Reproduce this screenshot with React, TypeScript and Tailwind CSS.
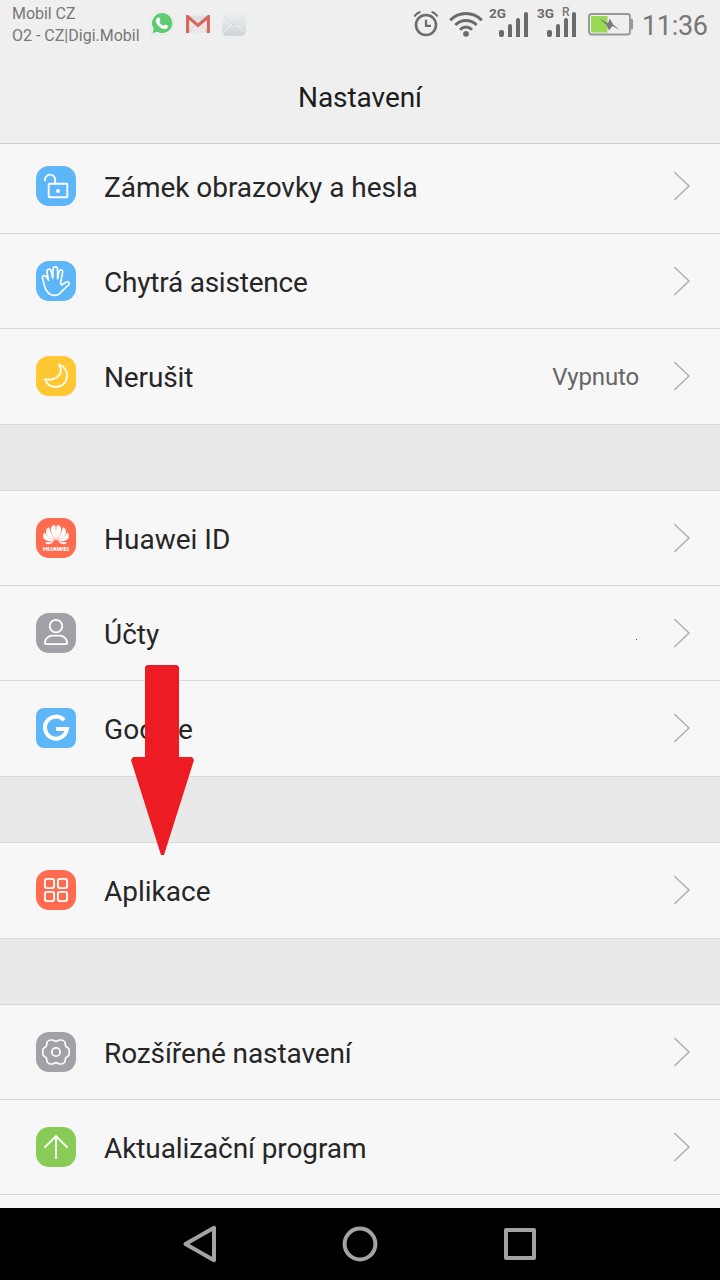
import type { ReactNode } from "react";

type SettingsRowProps = {
    label: string;
    icon: ReactNode;
    // background and corner radius of the icon tile
    tile: string;
    value?: string;
    dot?: boolean;
    tall?: boolean;
    tracking?: string;
};

const LockIcon = () => (
    <svg viewBox="0 0 40 40" className="size-10" fill="none" stroke="white" strokeWidth="1.9">
        <rect x="12.7" y="17.7" width="18.6" height="13.6" rx="0.8" />
        <path d="M9 15.3v-1.6a5.1 5.1 0 0 1 10.2 0v4" />
        <circle cx="22" cy="25" r="2" fill="white" stroke="none" />
    </svg>
);

const HandIcon = () => (
    <svg viewBox="0 0 40 40" className="size-10" fill="none" stroke="white" strokeWidth="1.6" strokeLinejoin="round" strokeLinecap="round">
        <path d="M12.5 19.3 10.2 15.6C8.8 13.8 5.8 15 6.6 17.4L8.3 24C9.3 28.5 11.3 31.6 14.6 33.6Q18.3 35.2 22.6 33.6C25.8 31 27.6 27.8 32.6 24.2C34.5 22.4 32.4 19.8 30 21.2L25.4 24C24 22.6 24.7 20.5 25.2 18.5L26.7 11.2C27 8.8 23.6 8 23 10.6L21.6 17.7L21.5 8C21.4 5.2 17.3 5.2 17 8L16.8 17.3L15 9.6C14.2 7.2 10.5 8 11 10.8L12.5 19.3" />
    </svg>
);

const MoonIcon = () => (
    <svg viewBox="0 0 40 40" className="size-10" fill="none" stroke="white" strokeWidth="1.8" strokeLinejoin="round">
        <path d="M22.8 8.7C28 10.4 31.3 14.8 31.1 19.8C30.9 26.2 25.9 31 19.8 31C14.7 31 10.5 27.8 8.9 23C14.5 24.8 20.5 23.2 23.4 18.8C25.4 15.8 25 11.8 22.8 8.7Z" />
    </svg>
);

const HuaweiIcon = () => (
    <svg viewBox="0 0 40 40" className="size-10" fill="white">
        <path d="M19.6 22.5C17 18.8 14.5 14.5 14.9 10.4C15.2 8.4 17 7.2 19 7C20.100 10.500 20.200 17 19.600 22.500Z" />
        <path d="M20.4 22.5C23 18.8 25.5 14.5 25.1 10.4C24.8 8.4 23 7.2 21 7C19.900 10.500 19.800 17 20.400 22.500Z" />
        <path d="M18.6 22.9C14.7 21 10.4 18 10 14.200C9.8 12 11 10 13 9.200C14.4 13.800 16.800 18.800 18.600 22.900Z" />
        <path d="M21.4 22.9C25.3 21 29.6 18 30 14.200C30.2 12 29 10 27 9.200C25.6 13.800 23.200 18.800 21.400 22.900Z" />
        <path d="M18.2 23.500C13.6 23.500 9.3 23.200 7.7 20.200C6.7 18.200 7 16 8.4 14.400C11 17.800 14.8 21 18.200 23.500Z" />
        <path d="M21.8 23.500C26.4 23.500 30.7 23.200 32.3 20.200C33.3 18.200 33 16 31.6 14.400C29 17.800 25.2 21 21.800 23.500Z" />
        <path d="M17.6 24.300H9C10.5 26.900 14 26.600 17.600 24.300Z" />
        <path d="M22.4 24.300H31C29.5 26.900 26 26.600 22.400 24.300Z" />
        <text x="7" y="33" fontSize="5.4" fontWeight="800" textLength="26" lengthAdjust="spacingAndGlyphs" fontFamily="Inter, sans-serif">HUAWEI</text>
    </svg>
);

const PersonIcon = () => (
    <svg viewBox="0 0 40 40" className="size-10" fill="none" stroke="white" strokeWidth="1.8">
        <circle cx="20" cy="13.1" r="6.3" />
        <path d="M9.8 31.1Q8.9 31.1 8.9 30.2C8.9 25.4 12.5 22.7 16.6 22.7H23.4C27.5 22.7 31.1 25.4 31.1 30.2Q31.1 31.1 30.2 31.1Z" />
    </svg>
);

const GoogleIcon = () => (
    <svg viewBox="0 0 40 40" className="size-10" fill="none" stroke="white" strokeWidth="4">
        <path d="M28.1 12.2A11 11 0 1 0 30.9 21H20" />
    </svg>
);

const AppsIcon = () => (
    <svg viewBox="0 0 40 40" className="size-10" fill="none" stroke="white" strokeWidth="1.9">
        <rect x="8.9" y="8.9" width="9.2" height="9.2" rx="2" />
        <rect x="21.9" y="8.9" width="9.2" height="9.2" rx="2" />
        <rect x="8.9" y="21.9" width="9.2" height="9.2" rx="2" />
        <rect x="21.9" y="21.9" width="9.2" height="9.2" rx="2" />
    </svg>
);

const GearIcon = () => (
    <svg viewBox="0 0 40 40" className="size-10" fill="none" stroke="white" strokeWidth="1.7" strokeLinejoin="round">
        <circle cx="20" cy="20" r="4.2" />
        <path d="M20 9.4C21.4 9.4 22.2 8 23.8 8H25C27.6 8 29.2 10 29.2 12.200C29.200 14.200 30.200 14.900 31.400 15.400C32.700 16 33.200 17.200 33.200 18.400V21.600C33.200 22.800 32.700 24 31.400 24.600C30.200 25.100 29.200 25.800 29.200 27.800C29.200 30 27.600 32 25 32H23.800C22.200 32 21.400 30.600 20 30.600C18.600 30.600 17.800 32 16.200 32H15C12.400 32 10.800 30 10.800 27.800C10.800 25.800 9.800 25.100 8.600 24.600C7.300 24 6.800 22.800 6.800 21.600V18.400C6.800 17.200 7.300 16 8.600 15.400C9.800 14.900 10.800 14.200 10.800 12.200C10.800 10 12.400 8 15 8H16.200C17.800 8 18.600 9.400 20 9.400Z" />
    </svg>
);

const UpdateIcon = () => (
    <svg viewBox="0 0 40 40" className="size-10" fill="none" stroke="white" strokeWidth="1.9">
        <path d="M20 32V9M8.5 20.6 20 9.1 31.5 20.6" />
    </svg>
);

const Chevron = () => (
    <svg viewBox="0 0 18 30" className="h-[30px] w-[18px]" fill="none" stroke="#b0b0b0" strokeWidth="1.5">
        <path d="M1.3 1 16 15 1.3 29" />
    </svg>
);

function SettingsRow({ label, icon, tile, value, dot, tall, tracking = "tracking-normal" }: SettingsRowProps) {
    return (
        <div className={`border-b border-[#d9d9d9] bg-[#f7f7f7] ${tall ? "h-24" : "h-[95px]"}`}>
            <div className="flex h-[94px] items-center pr-[29px] pl-9">
                <div className={`size-10 shrink-0 overflow-hidden ${tile}`}>{icon}</div>
                <span className={`ml-7 pt-1 text-[28px] leading-8 whitespace-nowrap text-[#262626] ${tracking}`}>{label}</span>
                <span className="grow" />
                {value && <span className="mr-[34px] pt-0.5 text-[24px] leading-7 tracking-[-0.15px] text-[#666]">{value}</span>}
                {dot && <span className="mt-3 mr-9 size-px bg-[#ed1c24]" />}
                <Chevron />
            </div>
        </div>
    );
}

function SignalBars() {
    return (
        <div className="flex h-[25px] items-end gap-1">
            <span className="h-[7px] w-[5px] rounded-xs bg-[#6b6b6b]" />
            <span className="h-[13px] w-1 rounded-t-xs bg-[#6b6b6b]" />
            <span className="h-[19px] w-1 rounded-t-xs bg-[#6b6b6b]" />
            <span className="h-[25px] w-1 rounded-t-xs bg-[#6b6b6b]" />
        </div>
    );
}

function StatusBar() {
    return (
        <div className="flex h-[50px] items-start">
            <div className="w-[150px] pt-[3px] pl-3 text-[16px] leading-[22px] whitespace-nowrap text-[#777]">
                <p className="tracking-[-0.05px]">Mobil CZ</p>
                <p>O2 - CZ|Digi.Mobil</p>
            </div>
            <svg viewBox="0 0 24 25" className="mt-[11px] h-[25px] w-6">
                <path d="M12.2 .6a11.500 11.500 0 0 1 0 23q-3 0-5.500-1.300L.8 24.400 2 17.500A11.500 11.500 0 0 1 12.200 .6Z" fill="#fff" stroke="#d4d4d4" strokeWidth=".6" />
                <path d="M12.200 2a10.100 10.100 0 1 1-5.200 18.700L2.300 22.400l1.300-4.900A10.100 10.100 0 0 1 12.200 2Z" fill="#5fcb72" />
                <path d="M8 6.400c.8-.4 1.200-.2 1.500.5l.9 2.200c.2.700-.9 1.300-1 1.900.8 1.700 2.200 3 4.100 3.800.6 0 1.100-1.400 1.800-1.200l2.400 1.200c.6.300.2 1.800-.4 2.400-1.800 1.700-4.800.8-6.900-.7-2.200-1.500-4.700-4.200-4.500-7.200.1-1.200.9-2.300 2.100-2.900Z" fill="#fff" />
            </svg>
            <svg viewBox="0 0 24 18" className="mt-[15px] ml-3 h-[18px] w-6">
                <path d="M0 0H24V18H0Z" fill="#e9e9e9" />
                <path d="M3 17.500 9 9.500M21 17.500 15 9.500" stroke="#d2d2d2" strokeWidth="1" />
                <path d="M3 1.200H21L12 8.500Z" fill="#dedede" />
                <path d="M1.600 18V1.600L12 10.500 22.400 1.600V18" fill="none" stroke="#db655c" strokeWidth="3.100" />
            </svg>
            <svg viewBox="0 0 24 24" className="mt-3 ml-3 size-6">
                <defs>
                    <linearGradient id="mail" x1="0" y1="0" x2="0" y2="1">
                        <stop offset="0" stopColor="#eceff0" />
                        <stop offset=".5" stopColor="#dfe4e7" />
                        <stop offset="1" stopColor="#ccd2d7" />
                    </linearGradient>
                </defs>
                <rect x=".3" y=".3" width="23.400" height="23.400" rx="4.500" fill="url(#mail)" />
                <path d="M1.500 5.500 10.500 13.500Q12 14.800 13.500 13.500L22.500 5.500M1.500 20.500 9 13M22.500 20.500 15 13" fill="none" stroke="#f4f6f7" strokeWidth=".8" />
                <path d="M2 5 10.500 12.600Q12 13.800 13.500 12.600L22 5" fill="none" stroke="#c3cacf" strokeWidth=".6" />
            </svg>

            <svg viewBox="0 0 26 27" className="mt-2.5 ml-[167px] h-[27px] w-[26px]" fill="none" stroke="#6b6b6b">
                <circle cx="13" cy="15" r="10" strokeWidth="2.600" />
                <path d="M13 9.800V15.800H18" strokeWidth="2.200" />
                <path d="M1.300 6.600Q3.500 3 7.400 1.800M24.700 6.600Q22.500 3 18.600 1.800" strokeWidth="2" />
            </svg>
            <svg viewBox="0 0 34 26" className="mt-[11px] ml-[10px] h-[26px] w-[34px]" fill="none" stroke="#6b6b6b" strokeWidth="3">
                <path d="M1.200 9.200Q8 2.500 17 2.500T32.800 9.200" />
                <path d="M6.300 14Q11 9.500 17 9.500T27.700 14" />
                <path d="M11 18.800Q13.800 16 17 16T23 18.800" />
                <circle cx="17" cy="22.800" r="2.900" fill="#6b6b6b" stroke="none" />
            </svg>
            <div className="mt-[5px] ml-[6px] flex w-[48px]">
                <span className="w-2.5 text-[13.500px] leading-[17px] font-bold text-[#6b6b6b]">2G</span>
                <div className="mt-[7px]"><SignalBars /></div>
            </div>
            <div className="relative mt-[5px] flex w-[51px]">
                <span className="w-2.5 text-[13.500px] leading-[17px] font-bold text-[#6b6b6b]">3G</span>
                <div className="mt-[7px]"><SignalBars /></div>
                <span className="absolute -top-px left-[25px] text-[12px] leading-4 font-medium text-[#777]">R</span>
            </div>
            <svg viewBox="0 0 46 23" className="mt-[13px] h-[23px] w-[46px]">
                <rect x="1" y="1" width="41" height="20.500" rx="2.500" fill="none" stroke="#969696" strokeWidth="1.900" />
                <path d="M43 6h1q1 0 1 1v8.500q0 1-1 1h-1Z" fill="#969696" />
                <rect x="3" y="3" width="16.500" height="16.500" fill="#99d956" />
                <path d="M11 5 20 10.200 21.800 5.500 25 11.200 31.500 17 24.400 13 21 17.500 18.500 12.200Z" fill="#7b7b7b" />
            </svg>
            <span className="mt-[10px] ml-[8px] text-[27px] leading-[32px] tracking-[-0.3px] text-[#777]">11:36</span>
        </div>
    );
}

function NavigationBar() {
    return (
        <div className="flex h-[72px] items-center justify-center gap-[120px] bg-black">
            <svg viewBox="0 0 40 40" className="size-10" fill="none" stroke="#a3a3a3" strokeWidth="4" strokeLinejoin="round">
                <path d="M5.500 20 34 3.800V36.200Z" />
            </svg>
            <svg viewBox="0 0 40 40" className="size-10" fill="none" stroke="#a3a3a3" strokeWidth="4">
                <circle cx="20" cy="20" r="15.400" />
            </svg>
            <svg viewBox="0 0 40 40" className="size-10" fill="none" stroke="#a3a3a3" strokeWidth="4" strokeLinejoin="round">
                <rect x="6" y="6" width="28" height="28" />
            </svg>
        </div>
    );
}

export default function App() {
    return (
        <div className="relative flex h-[1280px] w-[720px] flex-col overflow-hidden bg-[#e9e9e9] font-['Roboto',sans-serif]">
            <header className="h-36 shrink-0 border-b border-[#cfcfcf] bg-[#efefef]">
                <StatusBar />
                <h1 className="pt-8 text-center text-[28px] leading-8 tracking-[-0.05px] text-[#1c1c1c]">Nastavení</h1>
            </header>

            <main className="flex h-[1064px] flex-col gap-[65px] overflow-hidden">
                <section className="-mt-[5px] shrink-0">
                    <SettingsRow label="Zámek obrazovky a hesla" icon={<LockIcon />} tile="bg-[#5cb6f8] rounded-[13px]" tracking="tracking-[-0.04px]" />
                    <SettingsRow label="Chytrá asistence" icon={<HandIcon />} tile="bg-[#5cb6f8] rounded-[13px]" tracking="tracking-[-0.22px]" />
                    <SettingsRow label="Nerušit" icon={<MoonIcon />} tile="bg-[#ffc833] rounded-[13px]" value="Vypnuto" tall tracking="tracking-[-0.14px]" />
                </section>
                <section className="shrink-0 border-t border-[#d9d9d9]">
                    <SettingsRow label="Huawei ID" icon={<HuaweiIcon />} tile="bg-[#ff6b4f] rounded-[13px]" />
                    <SettingsRow label="Účty" icon={<PersonIcon />} tile="bg-[#a1a1a8] rounded-[13px]" dot />
                    <SettingsRow label="Google" icon={<GoogleIcon />} tile="bg-[#5cb6f8] rounded-lg" tall tracking="tracking-[0.1px]" />
                </section>
                <section className="shrink-0 border-t border-[#d9d9d9]">
                    <SettingsRow label="Aplikace" icon={<AppsIcon />} tile="bg-[#ff6b4f] rounded-[13px]" tall />
                </section>
                <section className="shrink-0 border-t border-[#d9d9d9]">
                    <SettingsRow label="Rozšířené nastavení" icon={<GearIcon />} tile="bg-[#a1a1a8] rounded-[13px]" tracking="tracking-[-0.1px]" />
                    <SettingsRow label="Aktualizační program" icon={<UpdateIcon />} tile="bg-[#88cb57] rounded-[13px]" tracking="tracking-[-0.1px]" />
                    <div className="h-4 bg-[#f7f7f7]" />
                </section>
            </main>

            <NavigationBar />

            {/* Arrow pointing at the Aplikace row */}
            <svg viewBox="0 0 64 190" className="absolute top-[665px] left-[131px] h-[190px] w-16" fill="#ed1c24">
                <path d="M16 0H46L48 2V92H61L63 95 33 190H30L0 95 2 92H14V2Z" />
            </svg>
        </div>
    );
}
